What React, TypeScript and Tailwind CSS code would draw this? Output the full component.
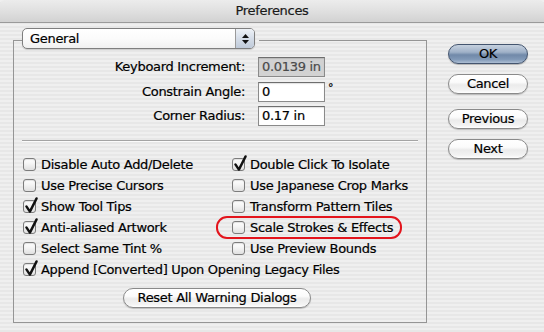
import React from "react";

function CheckBox({ checked }: { checked?: boolean }) {
  return (
    <span className="relative inline-block w-[13px] h-[13px] shrink-0 rounded-[3px] border border-[#7c7c7c] bg-[linear-gradient(180deg,#ffffff_0%,#f4f4f4_45%,#e0e0e0_100%)] shadow-[inset_0_1px_1px_rgba(0,0,0,0.12)]">
      {checked && (
        <svg className="absolute -top-[4px] -left-[1px] w-[17px] h-[17px] overflow-visible" viewBox="0 0 17 17">
          <path d="M3.4 9.4 L6.9 14.6 L13.6 1.4" fill="none" stroke="#111" strokeWidth="2.4" strokeLinecap="round" strokeLinejoin="round" />
        </svg>
      )}
    </span>
  );
}

function Row({ label, checked, children }: { label: string; checked?: boolean; children?: React.ReactNode }) {
  return (
    <div className="relative flex items-center h-[21px] whitespace-nowrap">
      {children}
      <CheckBox checked={checked} />
      <span className="ml-[5px] relative">{label}</span>
    </div>
  );
}

function PillButton({ label, primary }: { label: string; primary?: boolean }) {
  return (
    <div
      className={
        primary
          ? "flex items-center justify-center w-[80px] h-[20px] rounded-full border border-[#44556f] bg-[linear-gradient(180deg,#c6d1df_0%,#9fb1c8_40%,#7189a9_55%,#8199b7_80%,#aebfd4_100%)] shadow-[0_1px_1px_rgba(0,0,0,0.25)] text-black"
          : "flex items-center justify-center w-[80px] h-[20px] rounded-full border border-[#8a8a8a] bg-[linear-gradient(180deg,#ffffff_0%,#fbfbfb_40%,#ebebeb_55%,#f3f3f3_85%,#ffffff_100%)] shadow-[0_1px_1px_rgba(0,0,0,0.2)] text-black"
      }
    >
      {label}
    </div>
  );
}

export default function App() {
  return (
    <div className="w-[544px] h-[332px] overflow-hidden flex flex-col text-[13px] tracking-[-0.3px] text-black [-webkit-text-stroke:0.2px_currentColor] font-['DejaVu_Sans','Liberation_Sans',sans-serif] bg-[repeating-linear-gradient(180deg,#efefef_0px,#efefef_2px,#e7e7e7_2px,#e7e7e7_4px)]">
      {/* Title bar */}
      <div className="h-[23px] shrink-0 flex items-center justify-center border-b border-[#9a9a9a] rounded-t-[5px] bg-[linear-gradient(180deg,#ececec_0%,#e0e0e0_50%,#d2d2d2_100%)] text-[#1a1a1a]">
        Preferences
      </div>

      <div className="flex">
        {/* Group box */}
        <div className="ml-[13px] mt-[17px] w-[414px] h-[283px] border border-[#959595] flex flex-col">
          {/* Popup */}
          <div className="-mt-[13px] ml-[8px] w-fit pr-[4px] bg-[repeating-linear-gradient(180deg,#efefef_0px,#efefef_2px,#e7e7e7_2px,#e7e7e7_4px)]">
            <div className="flex w-[233px] h-[21px] rounded-[5px] border border-[#7e7e7e] overflow-hidden bg-[linear-gradient(180deg,#ffffff_0%,#fbfbfb_50%,#f0f0f0_100%)] shadow-[0_1px_1px_rgba(0,0,0,0.15)]">
              <div className="flex-1 flex items-center pl-[7px]">General</div>
              <div className="w-[19px] border-l border-[#9a9a9a] flex flex-col items-center justify-center gap-[2px] bg-[linear-gradient(180deg,#eef2f7_0%,#d5dde8_50%,#bfcad9_100%)]">
                <svg width="7" height="4" viewBox="0 0 7 4"><path d="M3.5 0 L7 4 L0 4 Z" fill="#111" /></svg>
                <svg width="7" height="4" viewBox="0 0 7 4"><path d="M0 0 L7 0 L3.5 4 Z" fill="#111" /></svg>
              </div>
            </div>
          </div>

          {/* Fields */}
          <div className="flex items-center h-[20px] mt-[8px]">
            <div className="w-[231px] text-right">Keyboard Increment:</div>
            <div className="ml-[13px] w-[67px] h-[20px] flex items-center pl-[3px] border border-[#8a8a8a] border-t-[#6e6e6e] bg-[#d2d2d2] text-[#4a4a4a] shadow-[inset_0_1px_1px_rgba(0,0,0,0.12)]">0.0139 in</div>
          </div>
          <div className="flex items-center h-[20px] mt-[5px]">
            <div className="w-[231px] text-right">Constrain Angle:</div>
            <div className="ml-[13px] w-[67px] h-[20px] flex items-center pl-[3px] border border-[#8a8a8a] border-t-[#6e6e6e] bg-white shadow-[inset_0_1px_1px_rgba(0,0,0,0.12)]">0</div>
            <div className="ml-[3px] self-start -mt-[2px] text-[11px]">°</div>
          </div>
          <div className="flex items-center h-[20px] mt-[4px]">
            <div className="w-[231px] text-right">Corner Radius:</div>
            <div className="ml-[13px] w-[67px] h-[20px] flex items-center pl-[3px] border border-[#8a8a8a] border-t-[#6e6e6e] bg-white shadow-[inset_0_1px_1px_rgba(0,0,0,0.12)]">0.17 in</div>
          </div>

          {/* Separator */}
          <div className="ml-[8px] mt-[14px] w-[396px] h-[2px] border-t border-[#a4a4a4] border-b border-b-[#fbfbfb]" />

          {/* Checkboxes */}
          <div className="ml-[9px] mt-[12px] grid grid-cols-[209px_1fr]">
            <Row label="Disable Auto Add/Delete" />
            <Row label="Double Click To Isolate" checked />
            <Row label="Use Precise Cursors" />
            <Row label="Use Japanese Crop Marks" />
            <Row label="Show Tool Tips" checked />
            <Row label="Transform Pattern Tiles" />
            <Row label="Anti-aliased Artwork" checked />
            <Row label="Scale Strokes & Effects">
              <div className="absolute -left-[16px] -top-[1px] w-[186px] h-[23px] rounded-[11px] border-2 border-[#e3141c]" />
            </Row>
            <Row label="Select Same Tint %" />
            <Row label="Use Preview Bounds" />
            <div className="col-span-2">
              <Row label="Append [Converted] Upon Opening Legacy Files" checked />
            </div>
          </div>

          {/* Reset */}
          <div className="ml-[109px] mt-[8px] w-[188px] h-[20px] rounded-full flex items-center justify-center border border-[#8a8a8a] bg-[linear-gradient(180deg,#ffffff_0%,#fbfbfb_40%,#ebebeb_55%,#f3f3f3_85%,#ffffff_100%)] shadow-[0_1px_1px_rgba(0,0,0,0.2)]">
            Reset All Warning Dialogs
          </div>
        </div>

        {/* Right buttons */}
        <div className="ml-[21px] mt-[21px] flex flex-col">
          <PillButton label="OK" primary />
          <div className="mt-[10px]"><PillButton label="Cancel" /></div>
          <div className="mt-[15px]"><PillButton label="Previous" /></div>
          <div className="mt-[10px]"><PillButton label="Next" /></div>
        </div>
      </div>
    </div>
  );
}
